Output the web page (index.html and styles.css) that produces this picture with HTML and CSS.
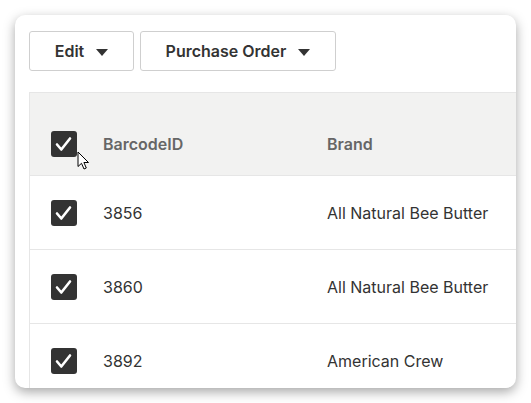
FILE: index.html
```html
<!DOCTYPE html>
<html lang="en">
<head>
    <meta charset="UTF-8">
    <title>Barcodes</title>
    <link rel="stylesheet" href="styles.css">
</head>
<body>
    <div class="card">
        <!-- Toolbar -->
        <div class="toolbar">
            <button class="btn btn-edit">Edit <span class="caret"></span></button>
            <button class="btn btn-po">Purchase Order <span class="caret"></span></button>
        </div>

        <!-- Barcode table -->
        <div class="grid">
            <div class="row head">
                <div class="cell check"><span class="box"><svg viewBox="0 0 26 26"><path d="M6 13.5 L10.3 18.5 L19 7.5" /></svg></span></div>
                <div class="cell code">BarcodeID</div>
                <div class="cell brand">Brand</div>
            </div>
            <div class="row">
                <div class="cell check"><span class="box"><svg viewBox="0 0 26 26"><path d="M6 13.5 L10.3 18.5 L19 7.5" /></svg></span></div>
                <div class="cell code">3856</div>
                <div class="cell brand">All Natural Bee Butter</div>
            </div>
            <div class="row">
                <div class="cell check"><span class="box"><svg viewBox="0 0 26 26"><path d="M6 13.5 L10.3 18.5 L19 7.5" /></svg></span></div>
                <div class="cell code">3860</div>
                <div class="cell brand">All Natural Bee Butter</div>
            </div>
            <div class="row">
                <div class="cell check"><span class="box"><svg viewBox="0 0 26 26"><path d="M6 13.5 L10.3 18.5 L19 7.5" /></svg></span></div>
                <div class="cell code">3892</div>
                <div class="cell brand">American Crew</div>
            </div>
        </div>

        <!-- mouse pointer over the select-all box -->
        <svg class="pointer" viewBox="0 0 13 20"><path d="M1 1 L1 15.5 L4.5 12.3 L7 18 L9.3 17 L6.9 11.5 L11.5 11.5 Z" /></svg>
    </div>
</body>
</html>
```

FILE: styles.css
```css
body {
    margin: 0;
    background-color: #ffffff;
    font-family: "Inter", "Open Sans", sans-serif;
}

.card {
    position: relative;
    margin: 15px;
    width: 501px;
    height: 373px;
    background-color: #ffffff;
    border-radius: 10px;
    overflow: hidden;
    box-shadow: 0 4px 12px rgba(0, 0, 0, 0.35);
    padding: 16px 0 0 14px;
    box-sizing: border-box;
}

.toolbar {
    display: flex;
    gap: 6px;
}

.btn {
    height: 40px;
    background-color: #ffffff;
    border: 1px solid #cfcfcf;
    border-radius: 3px;
    font-family: inherit;
    font-size: 16px;
    font-weight: 600;
    color: #333333;
    display: flex;
    align-items: center;
    justify-content: center;
    gap: 12px;
    padding: 0;
}

.btn-edit {
    width: 105px;
}

.btn-po {
    width: 196px;
}

.caret {
    width: 0;
    height: 0;
    border-left: 6px solid transparent;
    border-right: 6px solid transparent;
    border-top: 7px solid #333333;
    margin-top: 2px;
}

.grid {
    margin-top: 21px;
    border-left: 1px solid #e6e6e6;
    border-top: 1px solid #e6e6e6;
}

.row {
    display: flex;
    align-items: center;
    height: 73px;
    border-bottom: 1px solid #e6e6e6;
    font-size: 16px;
    color: #333333;
}

.row.head {
    height: 83px;
    padding-top: 20px;
    box-sizing: border-box;
    background-color: #f2f2f1;
    color: #666666;
    font-weight: 600;
}

.cell.check {
    width: 52px;
    padding-left: 21px;
    display: flex;
}

.cell.code {
    width: 224px;
}

.box {
    width: 26px;
    height: 26px;
    background-color: #333333;
    border-radius: 3px;
    display: block;
}

.box svg {
    width: 26px;
    height: 26px;
    display: block;
}

.box path {
    fill: none;
    stroke: #ffffff;
    stroke-width: 2.6;
    stroke-linecap: round;
    stroke-linejoin: round;
}

.pointer {
    position: absolute;
    left: 62px;
    top: 136px;
    width: 13px;
    height: 20px;
}

.pointer path {
    fill: #ffffff;
    stroke: #000000;
    stroke-width: 1;
    stroke-linejoin: round;
}
```
